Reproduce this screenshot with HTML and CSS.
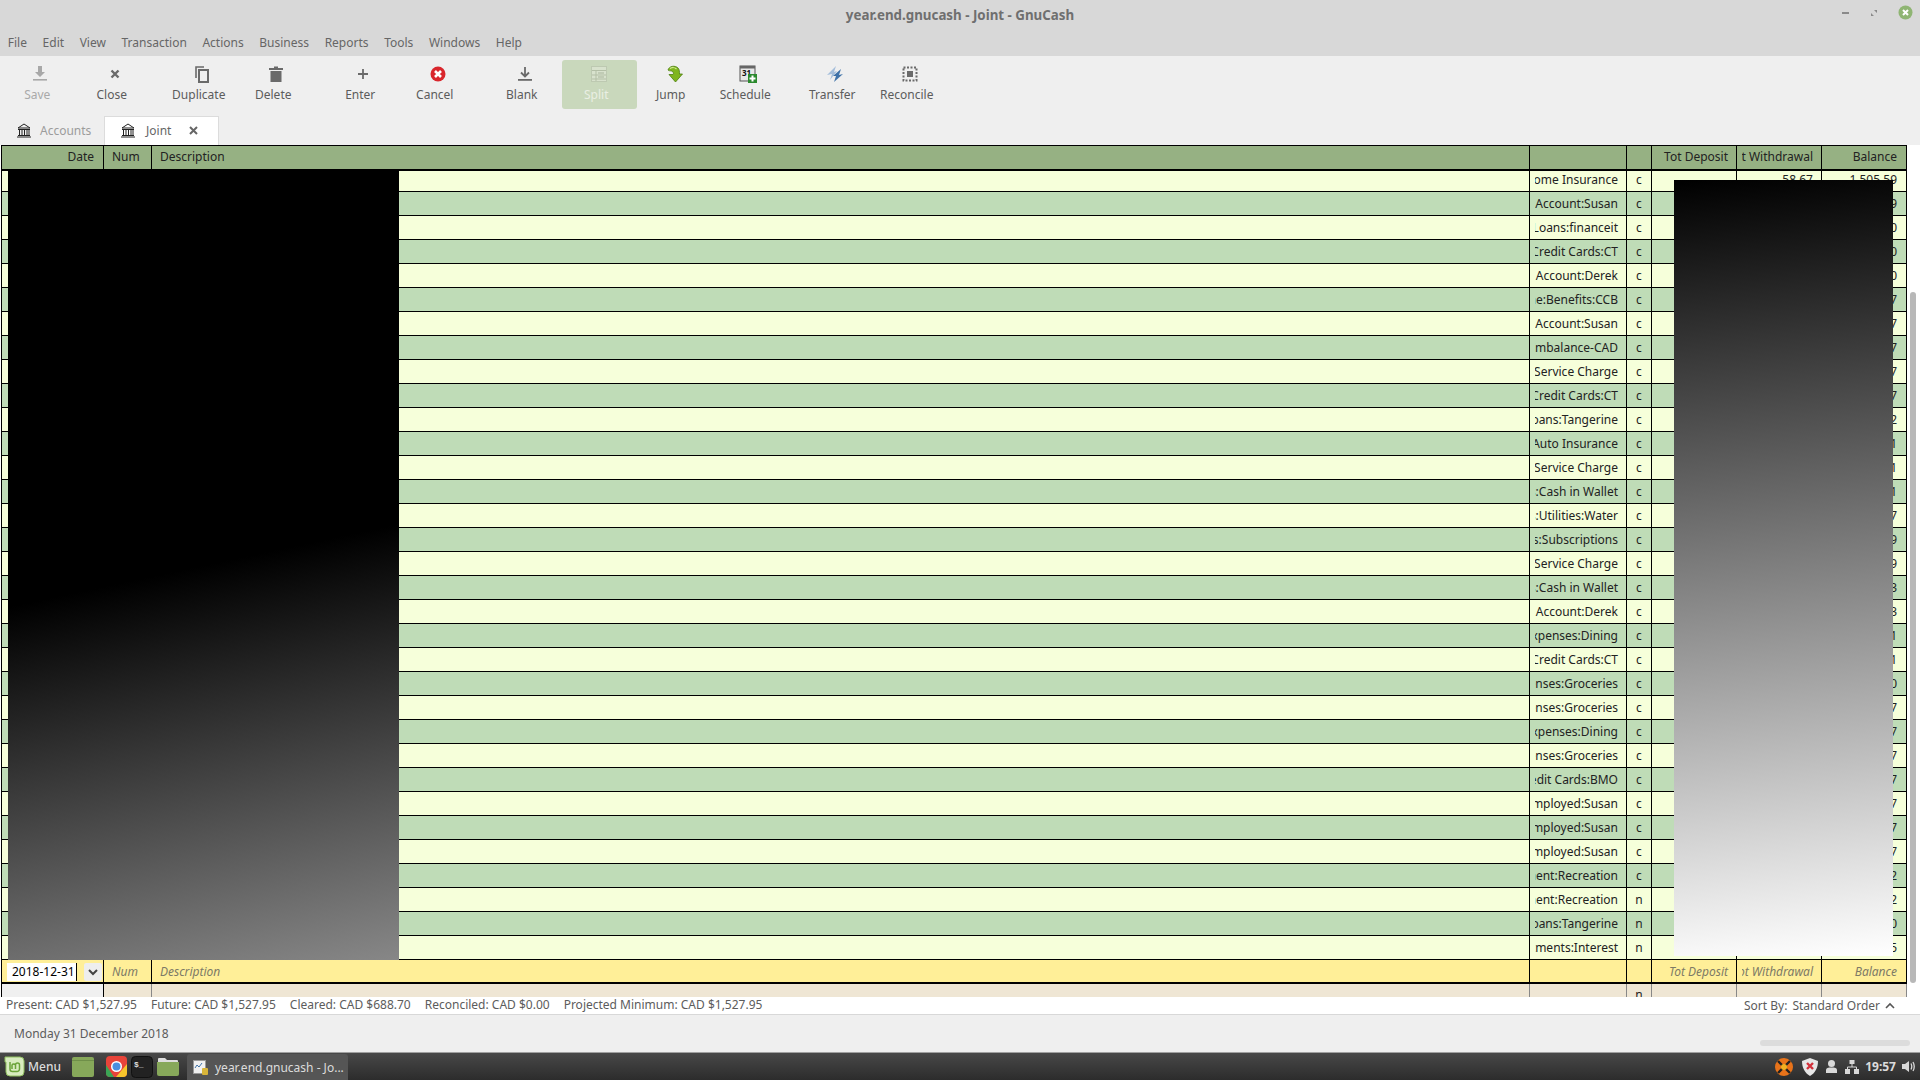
FILE: index.html
```html
<!DOCTYPE html>
<html lang="en">
<head>
    <meta charset="UTF-8">
    <title>year.end.gnucash - Joint - GnuCash</title>
    <link rel="stylesheet" href="styles.css">
</head>
<body>

<header class="titlebar">
    <div class="title">year.end.gnucash - Joint - GnuCash</div>
    <div class="win-controls">
        <svg width="8" height="4" viewBox="0 0 8 4"><rect y="1" width="7" height="2" fill="#8a8a8a"/></svg>
        <svg width="8" height="8" viewBox="0 0 8 8"><path d="M1 4V7H4ZM4 1H7V4Z" fill="#8a8a8a"/></svg>
        <svg width="15" height="15" viewBox="0 0 15 15"><circle cx="7.5" cy="7.5" r="7" fill="#8fb573"/><path d="M5 5L10 10M10 5L5 10" stroke="#fff" stroke-width="2"/></svg>
    </div>
</header>

<nav class="menubar">
    <span>File</span><span>Edit</span><span>View</span><span>Transaction</span><span>Actions</span><span>Business</span><span>Reports</span><span>Tools</span><span>Windows</span><span>Help</span>
</nav>

<div class="toolbar">
    <div class="tool disabled">
        <svg width="18" height="18" viewBox="0 0 18 18"><path d="M7 1H11V7H14L9 12L4 7H7Z" fill="#a8a8a8"/><rect x="2" y="14" width="14" height="1.6" fill="#a8a8a8"/></svg>
        <span>Save</span>
    </div>
    <div class="tool">
        <svg width="18" height="18" viewBox="0 0 18 18"><path d="M5.5 5.5L12.5 12.5M12.5 5.5L5.5 12.5" stroke="#6a6a6a" stroke-width="2.4"/></svg>
        <span>Close</span>
    </div>
    <div class="tool group-start">
        <svg width="18" height="18" viewBox="0 0 18 18"><path d="M3 13V2H11" fill="none" stroke="#6a6a6a" stroke-width="1.6"/><rect x="6" y="5" width="9" height="12" fill="none" stroke="#6a6a6a" stroke-width="2"/></svg>
        <span>Duplicate</span>
    </div>
    <div class="tool">
        <svg width="18" height="18" viewBox="0 0 18 18"><path d="M2 3H7V1.500H11V3H16V5H2ZM3.500 6H14.500V17H3.500Z" fill="#6a6a6a"/></svg>
        <span>Delete</span>
    </div>
    <div class="tool group-start">
        <svg width="18" height="18" viewBox="0 0 18 18"><path d="M9 4V14M4 9H14" stroke="#6a6a6a" stroke-width="1.800"/></svg>
        <span>Enter</span>
    </div>
    <div class="tool">
        <svg width="18" height="18" viewBox="0 0 18 18"><circle cx="9" cy="9" r="7.500" fill="#d9262c"/><path d="M6 6L12 12M12 6L6 12" stroke="#fff" stroke-width="2.600"/></svg>
        <span>Cancel</span>
    </div>
    <div class="tool group-start">
        <svg width="18" height="18" viewBox="0 0 18 18"><path d="M9 2V11M5 7.500L9 11.500L13 7.500" fill="none" stroke="#6a6a6a" stroke-width="1.800"/><rect x="2" y="14" width="14" height="1.800" fill="#6a6a6a"/></svg>
        <span>Blank</span>
    </div>
    <div class="tool split-on">
        <svg width="18" height="18" viewBox="0 0 18 18"><rect x="1.500" y="1.500" width="15" height="15" fill="#d8e2cd" stroke="#bdc9b1"/><path d="M2 5.500H16M2 10H16M2 14H16M6 6V16" stroke="#b3bfa6"/><path d="M8 8H14M8 12H14" stroke="#a9b59c"/></svg>
        <span>Split</span>
    </div>
    <div class="tool">
        <svg width="18" height="18" viewBox="0 0 18 18"><path d="M3 5C4 1 10 0 13 3C14.500 4.500 14.500 7 14.500 9H17.500L10.500 17L4 9.500H8C9 9 8.500 6.500 6.500 6C5 5.700 4 6 3 5Z" fill="#7fb51e" stroke="#4d7f10" stroke-width=".8"/><path d="M5 3.500C7 2.300 10 2.500 11.500 4" fill="none" stroke="#d3ec95" stroke-width="1.200"/></svg>
        <span>Jump</span>
    </div>
    <div class="tool">
        <svg width="18" height="18" viewBox="0 0 18 18"><rect x="1" y="1" width="15" height="15" fill="#e8e8e8" stroke="#555"/><rect x="1" y="1" width="15" height="2.500" fill="#666"/><text x="3" y="11" class="cal-text">31</text><rect x="9" y="9" width="9" height="9" fill="#2b8a2e"/><path d="M13.500 10.500V16.500M10.500 13.500H16.500" stroke="#fff" stroke-width="2"/></svg>
        <span>Schedule</span>
    </div>
    <div class="tool group-start">
        <svg width="18" height="18" viewBox="0 0 18 18"><path d="M1 10L10 1L8 7L11 6L4 15L6 9Z" fill="#a4bedb"/><path d="M7 11L15 4L13 10L17 9L8 17L10 11Z" fill="#3f72a8"/></svg>
        <span>Transfer</span>
    </div>
    <div class="tool">
        <svg width="18" height="18" viewBox="0 0 18 18"><rect x="2.500" y="2.500" width="13" height="13" fill="none" stroke="#6a6a6a" stroke-width="2" stroke-dasharray="2 1.500"/><rect x="6" y="6" width="6" height="6" fill="#6a6a6a"/></svg>
        <span>Reconcile</span>
    </div>
</div>

<div class="tabs">
    <div class="tab tab-off">
        <svg class="bank" width="14" height="15" viewBox="0 0 14 15"><path d="M7 1L13 5H1Z" fill="none" stroke="#222"/><path d="M1 6.500H13M1 12.500H13M0 14H14" stroke="#222"/><path d="M2.500 7V12M5 7V12M7.500 7V12M10 7V12M12 7V12" stroke="#222"/></svg>
        <span>Accounts</span>
    </div>
    <div class="tab tab-on">
        <svg class="bank" width="14" height="15" viewBox="0 0 14 15"><path d="M7 1L13 5H1Z" fill="none" stroke="#222"/><path d="M1 6.500H13M1 12.500H13M0 14H14" stroke="#222"/><path d="M2.500 7V12M5 7V12M7.500 7V12M10 7V12M12 7V12" stroke="#222"/></svg>
        <span>Joint</span>
        <svg class="tab-x" width="9" height="9" viewBox="0 0 9 9"><path d="M1 1L8 8M8 1L1 8" stroke="#666" stroke-width="2"/></svg>
    </div>
</div>

<main class="register">
    <div class="sheet">
        <div class="row head">
            <div class="c right">Date</div><div class="c">Num</div><div class="c">Description</div><div class="c"></div><div class="c"></div><div class="c right">Tot Deposit</div><div class="c right clip"><span>Tot Withdrawal</span></div><div class="c right bal">Balance</div>
        </div>
        <div class="rows-view">
        <div class="rows">
            <div class="row"><div class="c"></div><div class="c"></div><div class="c"></div><div class="c acct"><span>Expenses:Home Insurance</span></div><div class="c rec">c</div><div class="c"></div><div class="c right">58.67</div><div class="c right bal">1,505.59</div></div>
            <div class="row"><div class="c"></div><div class="c"></div><div class="c"></div><div class="c acct"><span>Account:Susan</span></div><div class="c rec">c</div><div class="c"></div><div class="c"></div><div class="c right bal">9</div></div>
            <div class="row"><div class="c"></div><div class="c"></div><div class="c"></div><div class="c acct"><span>Loans:financeit</span></div><div class="c rec">c</div><div class="c"></div><div class="c"></div><div class="c right bal">0</div></div>
            <div class="row"><div class="c"></div><div class="c"></div><div class="c"></div><div class="c acct"><span>Credit Cards:CT</span></div><div class="c rec">c</div><div class="c"></div><div class="c"></div><div class="c right bal">0</div></div>
            <div class="row"><div class="c"></div><div class="c"></div><div class="c"></div><div class="c acct"><span>Account:Derek</span></div><div class="c rec">c</div><div class="c"></div><div class="c"></div><div class="c right bal">0</div></div>
            <div class="row"><div class="c"></div><div class="c"></div><div class="c"></div><div class="c acct"><span>Income:Benefits:CCB</span></div><div class="c rec">c</div><div class="c"></div><div class="c"></div><div class="c right bal">7</div></div>
            <div class="row"><div class="c"></div><div class="c"></div><div class="c"></div><div class="c acct"><span>Account:Susan</span></div><div class="c rec">c</div><div class="c"></div><div class="c"></div><div class="c right bal">7</div></div>
            <div class="row"><div class="c"></div><div class="c"></div><div class="c"></div><div class="c acct"><span>Imbalance-CAD</span></div><div class="c rec">c</div><div class="c"></div><div class="c"></div><div class="c right bal">7</div></div>
            <div class="row"><div class="c"></div><div class="c"></div><div class="c"></div><div class="c acct"><span>Bank Service Charge</span></div><div class="c rec">c</div><div class="c"></div><div class="c"></div><div class="c right bal">7</div></div>
            <div class="row"><div class="c"></div><div class="c"></div><div class="c"></div><div class="c acct"><span>Credit Cards:CT</span></div><div class="c rec">c</div><div class="c"></div><div class="c"></div><div class="c right bal">7</div></div>
            <div class="row"><div class="c"></div><div class="c"></div><div class="c"></div><div class="c acct"><span>Loans:Tangerine</span></div><div class="c rec">c</div><div class="c"></div><div class="c"></div><div class="c right bal">2</div></div>
            <div class="row"><div class="c"></div><div class="c"></div><div class="c"></div><div class="c acct"><span>Expenses:Auto Insurance</span></div><div class="c rec">c</div><div class="c"></div><div class="c"></div><div class="c right bal">1</div></div>
            <div class="row"><div class="c"></div><div class="c"></div><div class="c"></div><div class="c acct"><span>Bank Service Charge</span></div><div class="c rec">c</div><div class="c"></div><div class="c"></div><div class="c right bal">1</div></div>
            <div class="row"><div class="c"></div><div class="c"></div><div class="c"></div><div class="c acct"><span>Assets:Cash in Wallet</span></div><div class="c rec">c</div><div class="c"></div><div class="c"></div><div class="c right bal">1</div></div>
            <div class="row"><div class="c"></div><div class="c"></div><div class="c"></div><div class="c acct"><span>Expenses:Utilities:Water</span></div><div class="c rec">c</div><div class="c"></div><div class="c"></div><div class="c right bal">7</div></div>
            <div class="row"><div class="c"></div><div class="c"></div><div class="c"></div><div class="c acct"><span>Expenses:Subscriptions</span></div><div class="c rec">c</div><div class="c"></div><div class="c"></div><div class="c right bal">9</div></div>
            <div class="row"><div class="c"></div><div class="c"></div><div class="c"></div><div class="c acct"><span>Bank Service Charge</span></div><div class="c rec">c</div><div class="c"></div><div class="c"></div><div class="c right bal">9</div></div>
            <div class="row"><div class="c"></div><div class="c"></div><div class="c"></div><div class="c acct"><span>Assets:Cash in Wallet</span></div><div class="c rec">c</div><div class="c"></div><div class="c"></div><div class="c right bal">3</div></div>
            <div class="row"><div class="c"></div><div class="c"></div><div class="c"></div><div class="c acct"><span>Account:Derek</span></div><div class="c rec">c</div><div class="c"></div><div class="c"></div><div class="c right bal">3</div></div>
            <div class="row"><div class="c"></div><div class="c"></div><div class="c"></div><div class="c acct"><span>Expenses:Dining</span></div><div class="c rec">c</div><div class="c"></div><div class="c"></div><div class="c right bal">1</div></div>
            <div class="row"><div class="c"></div><div class="c"></div><div class="c"></div><div class="c acct"><span>Credit Cards:CT</span></div><div class="c rec">c</div><div class="c"></div><div class="c"></div><div class="c right bal">1</div></div>
            <div class="row"><div class="c"></div><div class="c"></div><div class="c"></div><div class="c acct"><span>Expenses:Groceries</span></div><div class="c rec">c</div><div class="c"></div><div class="c"></div><div class="c right bal">0</div></div>
            <div class="row"><div class="c"></div><div class="c"></div><div class="c"></div><div class="c acct"><span>Expenses:Groceries</span></div><div class="c rec">c</div><div class="c"></div><div class="c"></div><div class="c right bal">7</div></div>
            <div class="row"><div class="c"></div><div class="c"></div><div class="c"></div><div class="c acct"><span>Expenses:Dining</span></div><div class="c rec">c</div><div class="c"></div><div class="c"></div><div class="c right bal">7</div></div>
            <div class="row"><div class="c"></div><div class="c"></div><div class="c"></div><div class="c acct"><span>Expenses:Groceries</span></div><div class="c rec">c</div><div class="c"></div><div class="c"></div><div class="c right bal">7</div></div>
            <div class="row"><div class="c"></div><div class="c"></div><div class="c"></div><div class="c acct"><span>Credit Cards:BMO</span></div><div class="c rec">c</div><div class="c"></div><div class="c"></div><div class="c right bal">7</div></div>
            <div class="row"><div class="c"></div><div class="c"></div><div class="c"></div><div class="c acct"><span>Income:Employed:Susan</span></div><div class="c rec">c</div><div class="c"></div><div class="c"></div><div class="c right bal">7</div></div>
            <div class="row"><div class="c"></div><div class="c"></div><div class="c"></div><div class="c acct"><span>Income:Employed:Susan</span></div><div class="c rec">c</div><div class="c"></div><div class="c"></div><div class="c right bal">7</div></div>
            <div class="row"><div class="c"></div><div class="c"></div><div class="c"></div><div class="c acct"><span>Income:Employed:Susan</span></div><div class="c rec">c</div><div class="c"></div><div class="c"></div><div class="c right bal">7</div></div>
            <div class="row"><div class="c"></div><div class="c"></div><div class="c"></div><div class="c acct"><span>Entertainment:Recreation</span></div><div class="c rec">c</div><div class="c"></div><div class="c"></div><div class="c right bal">2</div></div>
            <div class="row"><div class="c"></div><div class="c"></div><div class="c"></div><div class="c acct"><span>Entertainment:Recreation</span></div><div class="c rec">n</div><div class="c"></div><div class="c"></div><div class="c right bal">2</div></div>
            <div class="row"><div class="c"></div><div class="c"></div><div class="c"></div><div class="c acct"><span>Loans:Tangerine</span></div><div class="c rec">n</div><div class="c"></div><div class="c"></div><div class="c right bal">0</div></div>
            <div class="row"><div class="c"></div><div class="c"></div><div class="c"></div><div class="c acct"><span>Investments:Interest</span></div><div class="c rec">n</div><div class="c"></div><div class="c"></div><div class="c right bal">5</div></div>
            <div class="redact redact-left"></div>
            <div class="redact redact-right"></div>
        </div>
        </div>
        <div class="row entry">
            <div class="c date-edit">
                <span class="date-input">2018-12-31</span>
                <span class="date-btn"><svg width="10" height="7" viewBox="0 0 10 7"><path d="M1 1L5 5L9 1" fill="none" stroke="#444" stroke-width="2"/></svg></span>
            </div>
            <div class="c hint">Num</div><div class="c hint">Description</div><div class="c"></div><div class="c"></div><div class="c right hint">Tot Deposit</div><div class="c right hint clip"><span>Tot Withdrawal</span></div><div class="c right bal hint">Balance</div>
        </div>
        <div class="row blank">
            <div class="c"></div><div class="c"></div><div class="c"></div><div class="c"></div><div class="c rec">n</div><div class="c"></div><div class="c"></div><div class="c"></div>
        </div>
    </div>
    <div class="vscroll"><div class="thumb"></div></div>
</main>

<div class="summary">
    <span>Present: CAD $1,527.95</span>
    <span>Future: CAD $1,527.95</span>
    <span>Cleared: CAD $688.70</span>
    <span>Reconciled: CAD $0.00</span>
    <span>Projected Minimum: CAD $1,527.95</span>
    <span class="sort">Sort By:<b>Standard Order</b><svg width="10" height="7" viewBox="0 0 10 7"><path d="M1 6L5 2L9 6" fill="none" stroke="#555" stroke-width="1.600"/></svg></span>
</div>

<div class="statusbar">
    <span>Monday 31 December 2018</span>
    <div class="progress"></div>
</div>

<footer class="taskbar">
    <div class="menu-btn">
        <svg width="21" height="21" viewBox="0 0 21 21"><path d="M1 1H16A4 4 0 0 1 20 5V16A4 4 0 0 1 16 20H6A4 4 0 0 1 2 16V6H1Z" fill="#d8ecc0" stroke="#8fbf5f"/><path d="M6 6V13A2.500 2.500 0 0 0 8.500 15.500H13A2.500 2.500 0 0 0 15.500 13V9A2 2 0 0 0 11.500 9V13M11.500 9A2 2 0 0 0 8 9V13" fill="none" stroke="#6aa339" stroke-width="1.500"/></svg>
        <span>Menu</span>
    </div>
    <svg class="launch show-desk" width="22" height="20" viewBox="0 0 22 20"><rect width="22" height="20" rx="2" fill="#87a85a"/><rect y="3" width="22" height="1" fill="#6f8f49"/></svg>
    <svg class="launch chrome" width="21" height="21" viewBox="0 0 21 21"><rect width="21" height="21" rx="4" fill="#e8443a"/><path d="M0 9L8 21H4A4 4 0 0 1 0 17Z" fill="#3aa655"/><path d="M10 21L21 8V17A4 4 0 0 1 17 21Z" fill="#f7c52c"/><circle cx="10.500" cy="10.500" r="5.500" fill="#fff"/><circle cx="10.500" cy="10.500" r="4" fill="#4a8fe0"/></svg>
    <svg class="launch term" width="22" height="22" viewBox="0 0 22 22"><rect x=".5" y=".5" width="21" height="21" rx="4" fill="#222" stroke="#111"/><text x="3" y="11" class="term-text">$_</text></svg>
    <svg class="launch folder" width="22" height="19" viewBox="0 0 22 19"><path d="M1 2A1 1 0 0 1 2 1H8L10 3H20A1 1 0 0 1 21 4V6H1Z" fill="#ddd"/><path d="M0 5H22V17A2 2 0 0 1 20 19H2A2 2 0 0 1 0 17Z" fill="#87a85a"/></svg>
    <div class="win-btn">
        <svg width="15" height="15" viewBox="0 0 15 15"><rect x=".5" y=".5" width="12" height="13" fill="#f0f0f0" stroke="#999"/><path d="M2 8L4 5L6 7L9 3" fill="none" stroke="#3f72a8"/><rect x="9" y="8" width="6" height="7" rx="1" fill="#d8b53a"/></svg>
        <span>year.end.gnucash - Jo...</span>
    </div>
    <div class="tray">
        <svg width="20" height="20" viewBox="0 0 20 20"><circle cx="10" cy="10" r="9" fill="#e8731a"/><path d="M4 4L16 16M16 4L4 16" stroke="#222" stroke-width="2.400"/><circle cx="10" cy="10" r="3" fill="#f0b020"/></svg>
        <svg width="16" height="18" viewBox="0 0 16 18"><path d="M8 0L16 3C16 10 13 15 8 18C3 15 0 10 0 3Z" fill="#e6e6e6"/><path d="M5 5L11 11M11 5L5 11" stroke="#d2303a" stroke-width="2.400"/></svg>
        <svg width="11" height="13" viewBox="0 0 11 13"><circle cx="5.500" cy="3.500" r="3.500" fill="#d8d8d8"/><path d="M0 13V10C0 8 2 7.500 5.500 7.500S11 8 11 10V13Z" fill="#d8d8d8"/></svg>
        <svg width="14" height="14" viewBox="0 0 14 14"><rect x="4.500" y="0" width="5" height="4" fill="#d8d8d8"/><rect y="9" width="5" height="5" fill="#d8d8d8"/><rect x="9" y="9" width="5" height="5" fill="#d8d8d8"/><path d="M7 4V7M2.500 9V7H11.500V9" fill="none" stroke="#d8d8d8"/></svg>
        <span class="clock">19:57</span>
        <svg width="14" height="13" viewBox="0 0 14 13"><path d="M0 4H3L7 1V12L3 9H0Z" fill="#d8d8d8"/><path d="M9 3.500Q10.500 6.500 9 9.500M11 2Q13.500 6.500 11 11" fill="none" stroke="#d8d8d8" stroke-width="1.300"/></svg>
    </div>
</footer>

</body>
</html>
```

FILE: styles.css
```css
body {
    margin: 0;
    width: 1920px;
    height: 1080px;
    overflow: hidden;
    display: flex;
    flex-direction: column;
    background: #efefef;
    font-family: "Noto Sans", sans-serif;
    font-size: 12px;
    color: #5c5c5c;
}

/* title + menu */
.titlebar {
    height: 30px;
    flex: none;
    background: #d8d8d8;
    display: flex;
    align-items: center;
    justify-content: center;
    position: relative;
}

.title {
    font-size: 13.33px;
    font-weight: bold;
    color: #6f6f6f;
}

.win-controls {
    position: absolute;
    right: 7px;
    top: 5px;
    display: flex;
    align-items: center;
    gap: 20px;
}

.menubar {
    height: 26px;
    flex: none;
    background: #d8d8d8;
    display: flex;
    align-items: center;
    padding-bottom: 2px;
    box-sizing: border-box;
    color: #666;
}

.menubar span {
    padding: 0 7.8px;
}

/* toolbar */
.toolbar {
    height: 60px;
    flex: none;
    box-sizing: border-box;
    padding: 4px 0 0 3px;
    display: flex;
    align-items: flex-start;
}

.tool {
    width: 74.5px;
    height: 49px;
    display: flex;
    flex-direction: column;
    align-items: center;
    border-radius: 3px;
    padding-top: 5px;
    box-sizing: border-box;
}

.tool svg {
    flex: none;
}

/* labels sit a bit left of the icons */
.tool span {
    line-height: 16px;
    margin: 4px 6px 0 0;
}

.group-start {
    margin-left: 12.5px;
}

.disabled {
    color: #a9a9a9;
}

.split-on {
    background: #c9d8bc;
    color: #e9efe3;
}

.cal-text {
    font-family: "Noto Sans", sans-serif;
    font-size: 8px;
    font-weight: bold;
    fill: #111;
}

/* tabs */
.tabs {
    height: 29px;
    flex: none;
    display: flex;
}

.tab {
    display: flex;
    align-items: center;
    box-sizing: border-box;
    height: 29px;
}

.tab-off {
    width: 104px;
    padding-left: 17px;
    color: #9c9c9c;
}

.tab-off span {
    margin-left: 9px;
}

.tab-on {
    width: 115px;
    padding: 0 0 1px 16px;
    background: #fff;
    border: 1px solid #dcdcdc;
    border-bottom: none;
    color: #666;
}

.tab-on span {
    margin-left: 11px;
}

.tab-x {
    margin-left: 18px;
}

/* register */
.register {
    height: 852px;
    flex: none;
    display: flex;
    background: #fff;
    overflow: hidden;
}

.sheet {
    width: 1906px;
    margin-left: 1px;
    flex: none;
    border-left: 1px solid #000;
    box-sizing: border-box;
    color: #222;
}

.row {
    display: grid;
    grid-template-columns: 102px 48px 1378px 97px 25px 85px 85px 85px;
    height: 24px;
    box-sizing: border-box;
    border-bottom: 1px solid #000;
    background: #f6ffda;
    line-height: 22px;
}

/* list is scrolled a little, so the first row is cut */
.rows-view {
    height: 789px;
    overflow: hidden;
}

.rows {
    position: relative;
    margin-top: -3px;
}

.rows .row {
    line-height: 24px;
}

.rows .row:nth-child(even) {
    background: #bfdcb7;
}

.c {
    border-right: 1px solid #000;
    padding: 0 8px;
    white-space: nowrap;
    overflow: hidden;
    min-width: 0;
}

.right {
    text-align: right;
}

.bal {
    padding-right: 9px;
}

.clip {
    display: flex;
    justify-content: flex-end;
    padding-left: 0;
    border-left: 5px solid transparent;
}

.head {
    height: 26px;
    background: #96b183;
    border-top: 1px solid #000;
    border-bottom: 2px solid #000;
}

.head .c:first-child {
    padding-right: 9px;
}

.acct {
    display: flex;
    justify-content: flex-end;
    padding: 0 8px 0 0;
    border-left: 5px solid transparent;
}

.rec {
    padding: 0;
    text-align: center;
}

.redact {
    position: absolute;
    top: 3px;
    bottom: 0;
}

.redact-left {
    left: 6px;
    width: 391px;
    background: linear-gradient(168deg, #000 50%, #878787 100%);
}

.redact-right {
    left: 1672px;
    width: 219px;
    top: 12px;
    bottom: 4px;
    background: linear-gradient(174deg, #000 0%, #fff 100%);
}

/* entry row */
.entry {
    height: 24px;
    background: #ffef98;
    border-bottom: 2px solid #000;
    line-height: 23px;
}

.hint {
    font-style: italic;
    color: #7d7a66;
}

.date-edit {
    padding: 3px 0 0 5px;
    display: flex;
}

.date-input {
    width: 70px;
    height: 18px;
    line-height: 18px;
    background: #fff;
    color: #000;
    padding-left: 5px;
    box-sizing: border-box;
    border-right: 1px solid #000;
}

.date-btn {
    width: 18px;
    height: 18px;
    margin-left: 7px;
    background: #eeeeee;
    border-radius: 2px;
    display: flex;
    align-items: center;
    justify-content: center;
}

.blank {
    height: 14px;
    background: #efe6d4;
    border-bottom: none;
}

.blank .c {
    border-right-color: #888;
}

.blank .c:first-child {
    background: #f0f0f0;
    border-right-color: #000;
}

.vscroll {
    width: 13px;
    flex: none;
    padding-left: 3px;
    box-sizing: border-box;
}

.thumb {
    width: 6px;
    height: 691px;
    margin-top: 147px;
    background: #b8b8b8;
    border-radius: 3px;
}

/* summary */
.summary {
    height: 18px;
    flex: none;
    box-sizing: border-box;
    display: flex;
    gap: 14px;
    padding: 0 25px 0 6px;
    background: #fff;
    border-bottom: 1px solid #d8d8d8;
    line-height: 16px;
}

.sort {
    margin-left: auto;
    display: flex;
    align-items: center;
}

.sort b {
    font-weight: normal;
    margin: 0 5px 0 5px;
}

.statusbar {
    height: 37px;
    flex: none;
    position: relative;
    padding-left: 14px;
    line-height: 37px;
}

.progress {
    position: absolute;
    right: 10px;
    top: 25px;
    width: 150px;
    height: 6px;
    background: #dcdcdc;
    border-radius: 3px;
}

/* panel */
.taskbar {
    flex: 1;
    display: flex;
    align-items: center;
    position: relative;
    box-sizing: border-box;
    border-top: 1px solid #a0a0a0;
    background: linear-gradient(#484848, #2c2c2c);
    color: #dcdcdc;
}

.menu-btn {
    display: flex;
    align-items: center;
    padding-left: 4px;
    width: 72px;
    box-sizing: border-box;
    font-weight: 500;
}

.menu-btn span {
    margin-left: 3px;
}

.launch {
    flex: none;
}

.chrome {
    margin-left: 12px;
}

.term {
    margin-left: 4px;
}

.folder {
    margin-left: 4px;
}

.term-text {
    font-family: "Liberation Mono", monospace;
    font-size: 8px;
    font-weight: bold;
    fill: #ddd;
}

.win-btn {
    margin-left: 8px;
    width: 161px;
    height: 26px;
    margin-top: 1px;
    box-sizing: border-box;
    padding-left: 6px;
    display: flex;
    align-items: center;
    background: #555;
    border-radius: 3px 3px 0 0;
}

.win-btn span {
    margin-left: 7px;
}

.tray {
    margin-left: auto;
    padding-right: 4px;
    display: flex;
    align-items: center;
    gap: 8px;
}

.clock {
    font-weight: bold;
    margin: 0 -2px 0 -2px;
}
```
